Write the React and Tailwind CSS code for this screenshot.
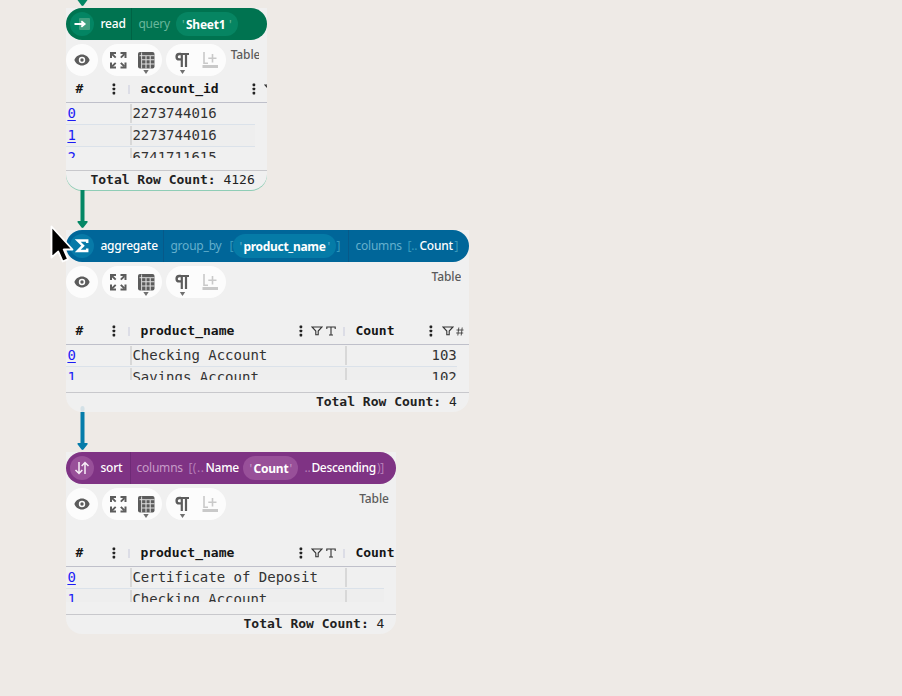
import React from "react";

const EyeIcon = () => (
  <svg width="16" height="12" viewBox="0 0 16 12" fill="#5c5c5c">
    <path fillRule="evenodd" d="M8 .5C4.500.5 1.600 2.800.4 6c1.200 3.200 4.100 5.500 7.600 5.500S14.400 9.200 15.600 6C14.400 2.800 11.500.5 8 .5ZM8 9.200A3.200 3.200 0 1 1 8 2.800a3.200 3.200 0 0 1 0 6.400Z" />
    <circle cx="8" cy="6" r="1.700" />
  </svg>
);

const ExpandIcon = () => (
  <svg width="18" height="18" viewBox="0 0 18 18" fill="none" stroke="#5c5c5c" strokeWidth="2">
    <path d="M2 7V2h5M11.500 2h5v5M16.500 11.500v5h-5M7 16.500H2v-5" />
    <path d="M3 3l3.700 3.700M15.500 3l-3.700 3.700M15.500 15.500l-3.700-3.700M3 15.500l3.700-3.700" strokeWidth="1.900" />
  </svg>
);

const TableIcon = () => (
  <svg width="18" height="24" viewBox="0 0 18 24">
    <rect x="1" y="1" width="16.500" height="16.500" rx="2" fill="#5c5c5c" />
    <path d="M2.500 4.700H17.500M4.600 1.500v16" stroke="#e8e8e8" strokeWidth=".9" fill="none" />
    <path d="M5 8.700h12.500M5 13h12.500M9 5v12.500M13.200 5v12.500" stroke="#dedede" strokeWidth="1.100" />
    <path d="M6.300 19h5.400L9 23Z" fill="#707070" />
  </svg>
);

const ParagraphIcon = () => (
  <svg width="18" height="24" viewBox="0 0 18 24" fill="none">
    <path d="M8 3H6.300a2.700 2.700 0 0 0 0 5.400H8" stroke="#5c5c5c" strokeWidth="2.400" />
    <path d="M6 3H16M8.800 3v13M13 3v13" stroke="#5c5c5c" strokeWidth="2.200" />
    <path d="M6.800 19h5.400L9.500 23Z" fill="#707070" />
  </svg>
);

const AxisIcon = () => (
  <svg width="18" height="18" viewBox="0 0 18 18" fill="none" stroke="#c9c9c9" strokeWidth="1.600">
    <path d="M3 1v11.200H7M11.500 3v8.500M7.300 7.200h8.200" />
    <path d="M1.500 15.500h15.500" strokeWidth="3" />
  </svg>
);

const ReadIcon = () => (
  <svg width="24" height="24" viewBox="0 0 24 24">
    <rect x="9" y="6" width="11" height="12" rx="1" fill="#3f9f7f" />
    <path d="M4.500 12h10M11.300 9.200l3.300 2.800-3.300 2.800" fill="none" stroke="#fff" strokeWidth="1.900" />
  </svg>
);

const SigmaIcon = () => (
  <svg width="24" height="24" viewBox="0 0 24 24" fill="none" stroke="#fff" strokeWidth="2.500">
    <path d="M17.200 9V6.600H7.800L13 11.700l-5.200 5.200h9.400v-2.500" />
  </svg>
);

const SortIcon = () => (
  <svg width="24" height="24" viewBox="0 0 24 24" fill="none" stroke="#f7eef7" strokeWidth="1.500">
    <path d="M9 6v11.500M5.500 14L9 17.500l3.300-3.500M15 18V6.500M11.700 10L15 6.500l3.500 3.500" />
  </svg>
);

const FilterIcon = () => (
  <svg className="shrink-0" width="12" height="10" viewBox="0 0 12 10" fill="none" stroke="#333" strokeWidth="1.100">
    <path d="M1 1h10L7.200 5v3.800H4.800V5Z" />
  </svg>
);

const TypeIcon = () => (
  <svg className="shrink-0" width="10" height="10" viewBox="0 0 10 10" fill="none" stroke="#333" strokeWidth="1.100">
    <path d="M.8 3V1h8.400v2M5 1v8M3 9h4" />
  </svg>
);

const HashIcon = () => (
  <svg className="shrink-0" width="8" height="9" viewBox="0 0 8 9" fill="none" stroke="#444" strokeWidth=".9">
    <path d="M2.800.5 1.800 8.500M6.200.5l-1 8M.5 3h7M.2 6h7" />
  </svg>
);

const Dots = () => (
  <svg className="shrink-0" width="4" height="12" viewBox="0 0 4 12" fill="#222">
    <rect x=".6" y=".6" width="2.600" height="2.600" rx=".6" />
    <rect x=".6" y="4.700" width="2.600" height="2.600" rx=".6" />
    <rect x=".6" y="8.800" width="2.600" height="2.600" rx=".6" />
  </svg>
);

const Token = ({ w, c = "", children }) => (
  <span className={`shrink-0 ${w} ${c}`}>{children}</span>
);

const Divider = ({ c }) => <span className={`h-8 w-px shrink-0 ${c}`} />;

function Toolbar({ label }) {
  return (
    <div className="flex h-9 shrink-0 overflow-hidden pt-1">
      <div className="flex h-8 w-8 shrink-0 items-center justify-center rounded-full bg-[#fcfcfc]">
        <EyeIcon />
      </div>
      <div className="ml-1 flex h-8 w-[60px] shrink-0 rounded-full bg-[#fcfcfc] pl-[7px] pt-[7px]">
        <ExpandIcon />
        <div className="ml-[10px]"><TableIcon /></div>
      </div>
      <div className="ml-[4px] flex h-8 w-[60px] shrink-0 rounded-full bg-[#fcfcfc] pl-[6.500px] pt-[7px]">
        <ParagraphIcon />
        <div className="ml-[10px]"><AxisIcon /></div>
      </div>
      <div className="ml-[4px] mr-[7.5px] min-w-0 flex-1 overflow-hidden whitespace-nowrap pt-[2px] font-['Noto_Sans',sans-serif] text-[12px] font-medium leading-[18px] tracking-[-0.1px] text-[#5b5b5b]">
        <div className="min-w-[30px] text-right">{label}</div>
      </div>
    </div>
  );
}

const Grip = () => <span className="h-[9px] w-[2px] shrink-0 bg-[#dcdde6]" />;

function HeadStart({ name, w }) {
  return (
    <>
      <span className="w-[37px] shrink-0 pl-[9px]">#</span>
      <span className="flex w-[25px] shrink-0 pl-[9px]"><Dots /></span>
      <Grip />
      <span className={`shrink-0 pl-[10px] ${w}`}>{name}</span>
      <Dots />
    </>
  );
}

function Row({ i, text, w, value, alt }) {
  return (
    <div className={`flex h-[22px] shrink-0 border-b border-[#dbe2ea] leading-[21px] ${alt ? "bg-[#eeeeee]" : ""}`}>
      <span className="w-[64px] shrink-0 pl-[1px] text-[#1c1cf5] underline underline-offset-2">{i}</span>
      <span className={`my-[1px] shrink-0 whitespace-nowrap border-l-2 border-[#d8d8d8] leading-[19px] ${w}`}>{text}</span>
      {value !== undefined && (
        <span className="my-[1px] flex-1 border-l-2 border-[#d8d8d8] text-right leading-[19px]">{value}</span>
      )}
    </div>
  );
}

function Node({ size, body, bar, tokens, headGap, head, rowsBox, rows, count }) {
  return (
    <section className={`flex flex-col ${size}`}>
      <div className={`flex h-full flex-col rounded-b-[16px] bg-[#f0f0f0] ${body}`}>
        <header className={`flex h-8 shrink-0 items-center whitespace-nowrap rounded-full pl-1 font-['Noto_Sans',sans-serif] text-[12px] leading-[34px] tracking-[-0.2px] ${bar}`}>
          {tokens}
        </header>
        <Toolbar label="Table" />
        <div className={`flex shrink-0 items-center overflow-hidden whitespace-nowrap border-b border-[#bfc0ca] font-['DejaVu_Sans_Mono',monospace] text-[13px] font-bold leading-[26px] text-[#151515] ${headGap}`}>
          {head}
        </div>
        <div className={`mr-3 flex shrink-0 flex-col overflow-hidden font-['DejaVu_Sans_Mono',monospace] text-[14px] text-[#333] ${rowsBox}`}>
          {rows}
        </div>
        <div className="mt-3 h-[21px] shrink-0 whitespace-pre border-t border-[#c8c8cc] pr-3 text-right font-['DejaVu_Sans_Mono',monospace] text-[13px] leading-[18px] text-[#222]">
          <b>Total Row Count:</b> {count}
        </div>
      </div>
    </section>
  );
}

const Connector = ({ color, tail }) => (
  <svg className="ml-[10.6px] block overflow-visible" width="12" height="40" viewBox="0 0 12 40" fill={color}>
    {tail && <rect x="3.500" y="-6" width="4" height="6" rx="2" opacity=".12" />}
    <path d="M3.500 0h4v31H10q1.200.2.600 1.200L6.500 37.500q-1 .8-2 0L.5 32.200q-.6-1 .6-1.200h2.400Z" />
  </svg>
);

export default function App() {
  return (
    <main className="relative flex h-[696px] w-[902px] flex-col overflow-hidden bg-[#eeeae6] pl-[66.4px]">
      <svg className="ml-[10.6px] block shrink-0" width="12" height="8" viewBox="0 0 12 8" fill="#048765">
        <path d="M.5 0h10L6.500 5.500q-1 .8-2 0Z" />
      </svg>

      <Node
        size="h-[182px] w-[200.400px]"
        body="shadow-[0_1px_0_#8fcdb6]"
        bar="bg-[#007350]"
        tokens={
          <>
            <span className="mr-[6px] h-6 w-6 rounded-full bg-[#038563]"><ReadIcon /></span>
            <Token w="w-[31px]" c="font-medium text-white">read</Token>
            <Divider c="bg-[#006344]" />
            <Token w="w-[43.5px]" c="pl-[6px] text-[#68b79b]">query</Token>
            <span className="flex h-6 w-[62px] rounded-full bg-[#068562] pl-[6px] leading-[26px]">
              <Token w="w-[4px]" c="text-[#68b79b]">'</Token>
              <Token w="w-[43px]" c="font-bold text-white">Sheet1</Token>
              <Token w="w-[4px]" c="text-[#68b79b]">'</Token>
            </span>
          </>
        }
        headGap="h-[27px]"
        head={
          <>
            <HeadStart name="account_id" w="w-[122px]" />
            <span className="ml-2 flex shrink-0"><FilterIcon /></span>
          </>
        }
        rowsBox="h-[55px]"
        rows={
          <>
            <Row i="0" text="2273744016" w="w-[124px]" />
            <Row i="1" text="2273744016" w="w-[124px]" alt />
            <Row i="2" text="6741711615" w="w-[124px]" />
          </>
        }
        count="4126"
      />
      <Connector color="#048765" />

      <Node
        size="h-[182px] w-[402.400px]"
        body=""
        bar="bg-[#006699]"
        tokens={
          <>
            <span className="mr-[6px] h-6 w-6 rounded-full bg-[#077aa8]"><SigmaIcon /></span>
            <Token w="w-[63px]" c="font-medium text-white">aggregate</Token>
            <Divider c="bg-[#075989]" />
            <Token w="w-[65px]" c="pl-[6px] text-[#64b0cd]">group_by</Token>
            <Token w="w-[4px]" c="text-[#389abd]">[</Token>
            <span className="flex h-6 w-[103px] rounded-full bg-[#057ba7] pl-[6px] leading-[26px]">
              <Token w="w-[4px]" c="text-[#64b0cd]">'</Token>
              <Token w="w-[84px]" c="font-bold tracking-[-0.3px] text-white">product_name</Token>
              <Token w="w-[4px]" c="text-[#64b0cd]">'</Token>
            </span>
            <Token w="w-[12px]" c="text-[#389abd]">]</Token>
            <Divider c="bg-[#075989]" />
            <Token w="w-[58px]" c="pl-[6px] text-[#64b0cd]">columns</Token>
            <Token w="w-[12px]" c="text-[#389abd]">[..</Token>
            <Token w="w-[35px]" c="font-medium text-white">Count</Token>
            <Token w="w-[5px]" c="text-[#389abd]">]</Token>
          </>
        }
        headGap="h-[27px] mt-5"
        head={
          <>
            <HeadStart name="product_name" w="w-[169px]" />
            <span className="ml-[8px] flex w-[15px] shrink-0"><FilterIcon /></span>
            <span className="mr-[7px] flex shrink-0"><TypeIcon /></span>
            <Grip />
            <span className="w-[84px] shrink-0 pl-[10px]">Count</span>
            <Dots />
            <span className="ml-[9px] flex w-[14px] shrink-0"><FilterIcon /></span>
            <HashIcon />
          </>
        }
        rowsBox="h-[35px]"
        rows={
          <>
            <Row i="0" text="Checking Account" w="w-[215px]" value="103" />
            <Row i="1" text="Savings Account" w="w-[215px]" value="102" alt />
          </>
        }
        count="4"
      />
      <Connector color="#057caa" tail />

      <Node
        size="h-[182px] w-[330px]"
        body=""
        bar="bg-[#7f3384]"
        tokens={
          <>
            <span className="mr-[6px] h-6 w-6 rounded-full bg-[#985099]"><SortIcon /></span>
            <Token w="w-[30px]" c="font-medium text-white">sort</Token>
            <Divider c="bg-[#6f2a77]" />
            <Token w="w-[57px]" c="pl-[5px] text-[#c69bc7]">columns</Token>
            <Token w="w-[17px]" c="text-[#b57db7] tracking-[0.5px]">[(..</Token>
            <Token w="w-[38px]" c="font-medium text-white">Name</Token>
            <span className="flex h-6 w-[55px] rounded-full bg-[#985099] pl-[6px] leading-[26px]">
              <Token w="w-[4px]" c="text-[#c69bc7]">'</Token>
              <Token w="w-[36px]" c="font-bold text-white">Count</Token>
              <Token w="w-[4px]" c="text-[#c69bc7]">'</Token>
            </span>
            <Token w="w-[13px]" c="pl-[6px] text-[#b57db7]">..</Token>
            <Token w="w-[65.5px]" c="font-medium tracking-[-0.3px] text-white">Descending</Token>
            <Token w="w-[10px]" c="text-[#b57db7]">)]</Token>
          </>
        }
        headGap="h-[27px] mt-5"
        head={
          <>
            <HeadStart name="product_name" w="w-[169px]" />
            <span className="ml-[8px] flex w-[15px] shrink-0"><FilterIcon /></span>
            <span className="mr-[7px] flex shrink-0"><TypeIcon /></span>
            <Grip />
            <span className="shrink-0 pl-[10px]">Count</span>
          </>
        }
        rowsBox="h-[35px]"
        rows={
          <>
            <Row i="0" text="Certificate of Deposit" w="w-[215px]" value="" />
            <Row i="1" text="Checking Account" w="w-[215px]" value="" alt />
          </>
        }
        count="4"
      />

      <svg className="absolute left-[50px] top-[224px]" width="26" height="40" viewBox="0 0 26 40">
        <path d="M1.500 2.500v31l6.800-6 4.400 10 5.300-2.300-4.300-9.700h8.800Z" fill="#000" stroke="#fff" strokeWidth="1.800" strokeLinejoin="round" />
      </svg>
    </main>
  );
}
